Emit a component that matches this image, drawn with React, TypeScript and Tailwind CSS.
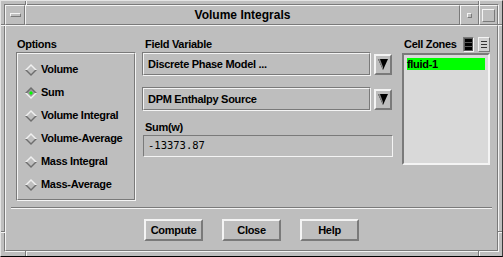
import React from "react";

const raised1 = "border border-t-[#f4f4f4] border-l-[#f4f4f4] border-b-[#7a7a7a] border-r-[#7a7a7a]";
const raised2 = "border-2 border-t-[#f4f4f4] border-l-[#f4f4f4] border-b-[#7a7a7a] border-r-[#7a7a7a]";
const sunken1 = "border border-t-[#7a7a7a] border-l-[#7a7a7a] border-b-[#f4f4f4] border-r-[#f4f4f4]";
const sunken2 = "border-2 border-t-[#7a7a7a] border-l-[#7a7a7a] border-b-[#f4f4f4] border-r-[#f4f4f4]";

function Groove({ className, innerClassName, children }: { className?: string; innerClassName?: string; children?: React.ReactNode }) {
  return (
    <div className={"border border-t-[#7a7a7a] border-l-[#7a7a7a] border-b-[#f4f4f4] border-r-[#f4f4f4] " + (className ?? "")}>
      <div className={"w-full h-full border border-t-[#f4f4f4] border-l-[#f4f4f4] border-b-[#7a7a7a] border-r-[#7a7a7a] " + (innerClassName ?? "")}>
        {children}
      </div>
    </div>
  );
}

function Diamond({ selected }: { selected?: boolean }) {
  const top = selected ? "#6e6e6e" : "#f0f0f0";
  const bot = selected ? "#f0f0f0" : "#6e6e6e";
  return (
    <svg width="12" height="12" viewBox="0 0 12 12" className="shrink-0">
      <polygon points="0,6 6,0 12,6" fill={top} />
      <polygon points="0,6 6,12 12,6" fill={bot} />
      <polygon points="2,6 6,2 10,6 6,10" fill={selected ? "#9a9a9a" : "#bebebe"} />
      {selected && <polygon points="4,6 6,4 8,6 6,8" fill="#00ff00" />}
    </svg>
  );
}

function Arrow() {
  return (
    <div className={"w-[18px] h-[21px] bg-[#bebebe] flex items-center justify-center " + raised2}>
      <svg width="10" height="11" viewBox="0 0 10 11">
        <polygon points="0,0 10,0 5,11" fill="#000" />
        <polygon points="0,0 2,0 5,8 5,11" fill="#8a8a8a" />
      </svg>
    </div>
  );
}

const options = ["Volume", "Sum", "Volume Integral", "Volume-Average", "Mass Integral", "Mass-Average"];

export default function App() {
  return (
    <div className="w-[503px] h-[257px] bg-[#bebebe] relative font-['Liberation_Sans',Arial,sans-serif] text-black border border-t-[#e4e4e4] border-l-[#e4e4e4] border-b-[#000] border-r-[#3a3a3a] pt-[3px] px-[3px] pb-[4px]">
      {/* frame notches */}
      <div className="absolute left-[24px] top-0 w-[1px] h-[4px] bg-[#7a7a7a]" />
      <div className="absolute left-[25px] top-0 w-[1px] h-[4px] bg-[#f4f4f4]" />
      <div className="absolute left-[477px] top-0 w-[1px] h-[4px] bg-[#7a7a7a]" />
      <div className="absolute left-[478px] top-0 w-[1px] h-[4px] bg-[#f4f4f4]" />
      <div className="absolute left-[24px] bottom-0 w-[1px] h-[5px] bg-[#7a7a7a]" />
      <div className="absolute left-[25px] bottom-0 w-[1px] h-[5px] bg-[#f4f4f4]" />
      <div className="absolute left-[477px] bottom-0 w-[1px] h-[5px] bg-[#7a7a7a]" />
      <div className="absolute left-[478px] bottom-0 w-[1px] h-[5px] bg-[#f4f4f4]" />
      <div className="absolute top-[23px] left-0 h-[1px] w-[4px] bg-[#7a7a7a]" />
      <div className="absolute top-[24px] left-0 h-[1px] w-[4px] bg-[#f4f4f4]" />
      <div className="absolute top-[23px] right-0 h-[1px] w-[4px] bg-[#7a7a7a]" />
      <div className="absolute top-[24px] right-0 h-[1px] w-[4px] bg-[#f4f4f4]" />
      <div className="absolute top-[230px] left-0 h-[1px] w-[4px] bg-[#7a7a7a]" />
      <div className="absolute top-[231px] left-0 h-[1px] w-[4px] bg-[#f4f4f4]" />
      <div className="absolute top-[230px] right-0 h-[1px] w-[4px] bg-[#7a7a7a]" />
      <div className="absolute top-[231px] right-0 h-[1px] w-[4px] bg-[#f4f4f4]" />

      <div className={"w-full h-full flex flex-col " + sunken1}>
        {/* title bar */}
        <div className="h-[20px] flex shrink-0">
          <div className={"w-[20px] h-full flex items-center justify-center " + raised1}>
            <div className={"w-[11px] h-[4px] " + raised1} />
          </div>
          <div className={"flex-1 h-full flex items-center justify-center text-[12px] font-bold leading-none " + raised1}>
            Volume Integrals
          </div>
          <div className={"w-[19px] h-full flex items-center justify-center " + raised1}>
            <div className={"w-[5px] h-[5px] " + raised1} />
          </div>
          <div className={"w-[19px] h-full flex items-center justify-center " + raised1}>
            <div className={"w-[13px] h-[13px] " + raised1} />
          </div>
        </div>

        {/* content */}
        <div className={"flex-1 flex flex-col pt-[10px] " + raised1}>
          <div className="flex pl-[10px] text-[11px] font-bold tracking-[-0.3px]">
            {/* Options */}
            <div className="w-[120px] flex flex-col">
              <div className="h-[16px] leading-[16px] pl-[1px]">Options</div>
              <Groove className="h-[149px]" innerClassName="pt-[4px] pl-[7px] flex flex-col">
                {options.map((o) => (
                  <div key={o} className="h-[23px] flex items-center gap-[4px]">
                    <Diamond selected={o === "Sum"} />
                    <span>{o}</span>
                  </div>
                ))}
              </Groove>
            </div>

            {/* Middle */}
            <div className="w-[251px] ml-[6px] flex flex-col">
              <div className="h-[16px] leading-[16px] pl-[3px]">Field Variable</div>
              <div className="h-[24px] flex items-center">
                <Groove className="w-[229px] h-[24px]" innerClassName="flex items-center pl-[4px]">
                  Discrete Phase Model ...
                </Groove>
                <div className="ml-[3px]"><Arrow /></div>
              </div>
              <div className="h-[24px] mt-[11px] flex items-center">
                <Groove className="w-[229px] h-[24px]" innerClassName="flex items-center pl-[4px]">
                  DPM Enthalpy Source
                </Groove>
                <div className="ml-[3px]"><Arrow /></div>
              </div>
              <div className="h-[16px] leading-[16px] mt-[8px] pl-[3px]">Sum(w)</div>
              <div className={"ml-[1px] w-[250px] h-[22px] flex items-center pl-[4px] font-normal tracking-normal font-['DejaVu_Sans_Mono',monospace] text-[10.5px] " + sunken1}>
                -13373.87
              </div>
            </div>

            {/* Right */}
            <div className="w-[88px] ml-[9px] flex flex-col">
              <div className="h-[16px] flex items-center">
                <span className="ml-[2px] leading-[16px]">Cell Zones</span>
                <div className="ml-auto flex gap-[4px]">
                  <div className={"w-[11px] h-[15px] bg-[#5a5a5a] flex flex-col justify-center gap-[1px] px-[1px] " + sunken1}>
                    <div className="h-[3px] bg-black" />
                    <div className="h-[3px] bg-black" />
                    <div className="h-[3px] bg-black" />
                  </div>
                  <div className={"w-[12px] h-[15px] bg-[#d0d0d0] flex flex-col justify-center gap-[2px] px-[2px] " + raised1}>
                    <div className="h-[1px] bg-[#333]" />
                    <div className="h-[1px] bg-[#333]" />
                    <div className="h-[1px] bg-[#333]" />
                  </div>
                </div>
              </div>
              <div className={"mt-[1px] h-[112px] bg-[#d9d9d9] p-[3px] " + sunken2}>
                <div className="h-[12px] bg-[#00ff00] leading-[12px]">fluid-1</div>
              </div>
            </div>
          </div>

          {/* separator */}
          <div className="mx-[5px] mt-[6px] h-[2px] border-t border-t-[#7a7a7a] border-b border-b-[#f4f4f4]" />

          {/* buttons */}
          <div className="mt-[10px] flex justify-center gap-[19px] text-[11px] font-bold tracking-[-0.3px]">
            {["Compute", "Close", "Help"].map((b) => (
              <div key={b} className={"w-[59px] h-[22px] flex items-center justify-center " + raised2}>
                {b}
              </div>
            ))}
          </div>
        </div>
      </div>
    </div>
  );
}
